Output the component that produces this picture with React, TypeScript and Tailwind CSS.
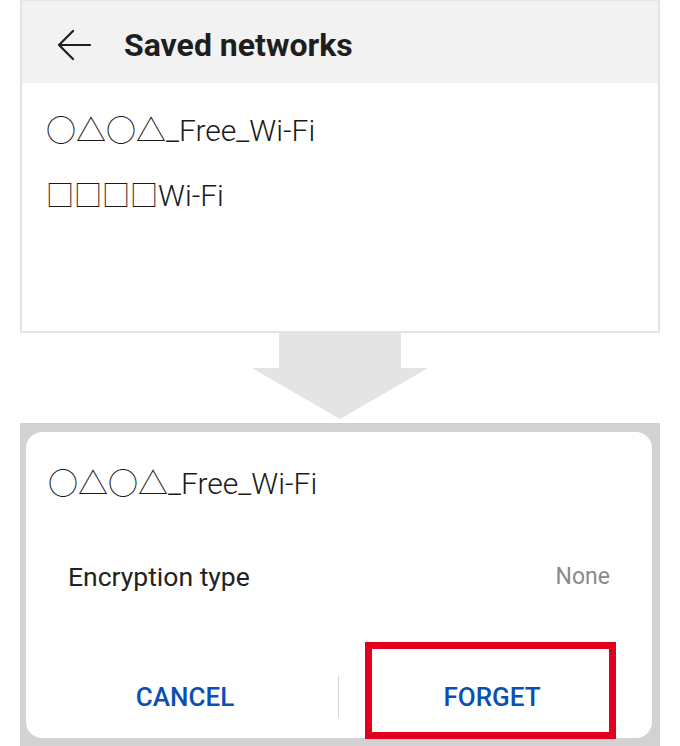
import React from 'react';

const font = { fontFamily: 'Roboto, "Noto Sans CJK JP", sans-serif' };

function BackArrow() {
  return (
    <svg width="34" height="32" viewBox="0 0 34 32" fill="none" stroke="#1f1f1f" strokeWidth="2.2" strokeLinecap="round" strokeLinejoin="round">
      <path d="M33 16H2M16 2L2 16l14 14" />
    </svg>
  );
}

function DownArrow() {
  return (
    <svg width="176" height="90" viewBox="0 0 176 90">
      <polygon points="27,0 149,0 149,35 176,35 88,86 0,35 27,35" fill="#e4e4e4" />
    </svg>
  );
}

export default function App() {
  return (
    <div className="w-[680px] h-[746px] bg-white flex flex-col items-center" style={font}>
      {/* saved networks list */}
      <div className="w-[640px] h-[333px] border-2 border-[#e4e4e4] border-t-[1px] flex flex-col">
        <div className="h-[82px] bg-[#f2f2f2] flex items-center pl-[35px] pt-[6px] gap-[33px]">
          <BackArrow />
          <span className="text-[32px] font-bold text-[#1e1e1e]">Saved networks</span>
        </div>
        <div className="flex flex-col pl-[24px] pt-[32px] gap-[33px] text-[30px] font-light text-[#1a1a1a] leading-[32px]">
          <span>○△○△_Free_Wi-Fi</span>
          <span><span className="text-[28px]">□□□□</span>Wi-Fi</span>
        </div>
      </div>

      <div className="h-[90px] flex justify-center">
        <DownArrow />
      </div>

      {/* forget dialog */}
      <div className="relative w-[640px] h-[323px] bg-[#d2d2d2] pt-[9px] pl-[6px] pr-[8px] pb-[8px]">
        <div className="h-[306px] bg-white rounded-[16px] flex flex-col">
          <div className="pl-[22px] pt-[36px] h-[100px] text-[30px] font-light text-[#1a1a1a] leading-[32px]">○△○△_Free_Wi-Fi</div>
          <div className="flex justify-between items-center px-[42px] h-[90px]">
            <span className="text-[26.5px] text-[#222]">Encryption type</span>
            <span className="text-[23px] text-[#8a8a8a]">None</span>
          </div>
          <div className="flex-1 flex items-center pt-[34px]">
            <button className="w-[312px] pl-[6px] text-[26px] font-medium text-[#0a50b2]">CANCEL</button>
            <div className="w-px h-[42px] bg-[#d6d6d6]" />
            <button className="flex-1 pr-[7px] text-[26px] font-medium text-[#0a50b2]">FORGET</button>
          </div>
        </div>
        <div className="absolute left-[345px] top-[219px] w-[251px] h-[97px] border-[7px] border-[#e2001f]" />
      </div>
    </div>
  );
}
